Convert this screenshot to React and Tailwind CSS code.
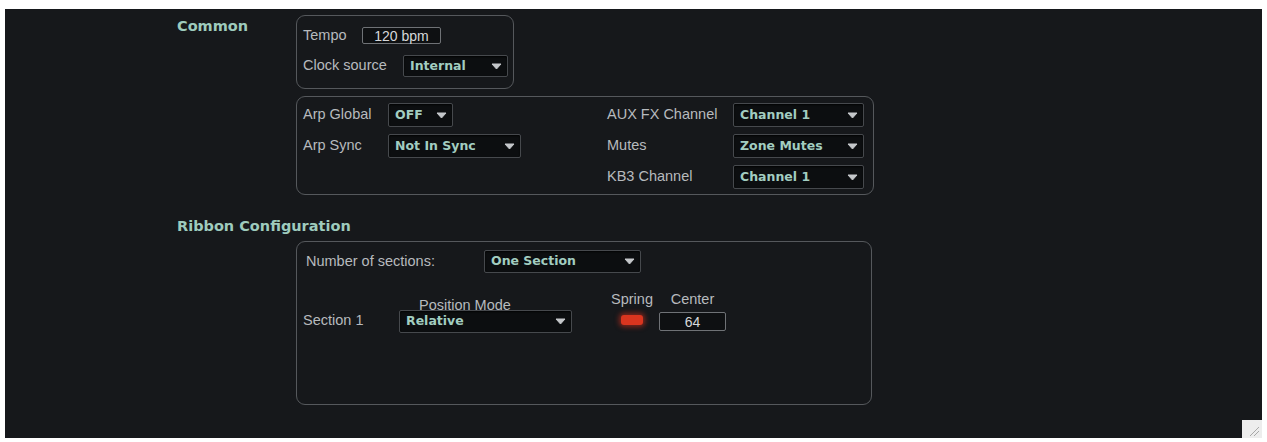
import React from 'react';

const labelFont = { fontFamily: '"Liberation Sans", Arial, sans-serif' };
const valueFont = { fontFamily: '"DejaVu Sans", Verdana, sans-serif' };

function Arrow() {
    return (
        <svg width="11" height="7" viewBox="0 0 11 7" className="shrink-0">
            <path d="M1 1 L10 1 L5.5 6 Z" fill="#c4c7ca" stroke="#c4c7ca" strokeWidth="1" strokeLinejoin="round" />
        </svg>
    );
}

function Select({ value, className }) {
    return (
        <div className={`flex items-center justify-between pl-[6px] pr-[5px] border border-[#46494d] bg-[#0c0e10] rounded-[2px] shadow-[inset_0_1px_2px_rgba(0,0,0,0.8)] ${className}`}>
            <span style={valueFont} className="text-[12.5px] font-bold text-[#a2cdc0] leading-none whitespace-nowrap">{value}</span>
            <Arrow />
        </div>
    );
}

function Field({ value, className }) {
    return (
        <div style={labelFont} className={`flex items-center justify-center border border-[#6f7276] bg-[#0e1012] rounded-[2px] text-[14px] text-[#d6d8da] leading-none ${className}`}>
            {value}
        </div>
    );
}

function Label({ children, className = '' }) {
    return (
        <span style={labelFont} className={`text-[14.5px] text-[#b7babe] whitespace-nowrap ${className}`}>{children}</span>
    );
}

function Heading({ children, className = '' }) {
    return (
        <div style={valueFont} className={`text-[14.5px] font-bold text-[#9ecbbd] leading-[18px] whitespace-nowrap ${className}`}>{children}</div>
    );
}

export default function App() {
    return (
        <div className="w-[1267px] h-[442px] bg-white pt-[9px] px-[5px]">
            <div className="relative h-[429px] bg-[#16181b] pl-[172px] pt-[6px]">
                {/* Common */}
                <div className="flex">
                    <Heading className="w-[119px] pt-[2px]">Common</Heading>
                    <div className="flex flex-col gap-[7px]">
                        <div className="w-[218px] h-[74px] border border-[#55585c] rounded-[9px] pl-[6px] pt-[11px]">
                            <div className="flex items-center h-[17px]">
                                <Label className="w-[59px]">Tempo</Label>
                                <Field value="120 bpm" className="w-[79px] h-[17px]" />
                            </div>
                            <div className="flex items-center mt-[11px]">
                                <Label className="w-[100px]">Clock source</Label>
                                <Select value="Internal" className="w-[105px] h-[22px]" />
                            </div>
                        </div>
                        <div className="w-[578px] h-[99px] border border-[#55585c] rounded-[9px] pl-[6px] pt-[6px] pr-[7px] flex">
                            <div className="w-[304px] flex flex-col gap-[7px]">
                                <div className="flex items-center h-[24px]">
                                    <Label className="w-[85px]">Arp Global</Label>
                                    <Select value="OFF" className="w-[65px] h-[24px]" />
                                </div>
                                <div className="flex items-center h-[24px]">
                                    <Label className="w-[85px]">Arp Sync</Label>
                                    <Select value="Not In Sync" className="w-[133px] h-[24px]" />
                                </div>
                            </div>
                            <div className="flex flex-col gap-[7px]">
                                <div className="flex items-center h-[24px]">
                                    <Label className="w-[126px]">AUX FX Channel</Label>
                                    <Select value="Channel 1" className="w-[131px] h-[24px]" />
                                </div>
                                <div className="flex items-center h-[24px]">
                                    <Label className="w-[126px]">Mutes</Label>
                                    <Select value="Zone Mutes" className="w-[131px] h-[24px]" />
                                </div>
                                <div className="flex items-center h-[24px]">
                                    <Label className="w-[126px]">KB3 Channel</Label>
                                    <Select value="Channel 1" className="w-[131px] h-[24px]" />
                                </div>
                            </div>
                        </div>
                    </div>
                </div>

                {/* Ribbon Configuration */}
                <Heading className="mt-[22px]">Ribbon Configuration</Heading>
                <div className="ml-[119px] mt-[6px] w-[576px] h-[164px] border border-[#55585c] rounded-[9px] pl-[6px] pt-[8px]">
                    <div className="flex items-center h-[23px] ml-[3px]">
                        <Label className="w-[178px]">Number of sections:</Label>
                        <Select value="One Section" className="w-[157px] h-[23px]" />
                    </div>
                    <div className="flex mt-[16px]">
                        <div className="w-[96px] mt-[20px] h-[23px] flex items-center">
                            <Label>Section 1</Label>
                        </div>
                        <div className="w-[173px] pt-[11px] flex flex-col">
                            <Label className="pl-[20px] leading-[10px] h-[10px]">Position Mode</Label>
                            <Select value="Relative" className="w-[173px] h-[23px]" />
                        </div>
                        <div className="ml-[37px] w-[46px] pt-[2px] flex flex-col items-center">
                            <Label className="leading-[17px]">Spring</Label>
                            <div className="mt-[7px] w-[22px] h-[10px] rounded-[3px] bg-[#d9351f] shadow-[0_0_5px_2px_rgba(220,50,30,0.55)]" />
                        </div>
                        <div className="ml-[4px] w-[67px] pt-[2px] flex flex-col items-center">
                            <Label className="leading-[17px]">Center</Label>
                            <Field value="64" className="mt-[4px] w-[67px] h-[19px]" />
                        </div>
                    </div>
                </div>

                {/* resize grip */}
                <div className="absolute right-0 bottom-0 w-[20px] h-[18px] bg-[#ededed]">
                    <svg width="20" height="18" viewBox="0 0 20 18">
                        <path d="M8 16 L17 7 M12 16 L17 11" stroke="#a8a8a8" strokeWidth="1" />
                    </svg>
                </div>
            </div>
        </div>
    );
}
